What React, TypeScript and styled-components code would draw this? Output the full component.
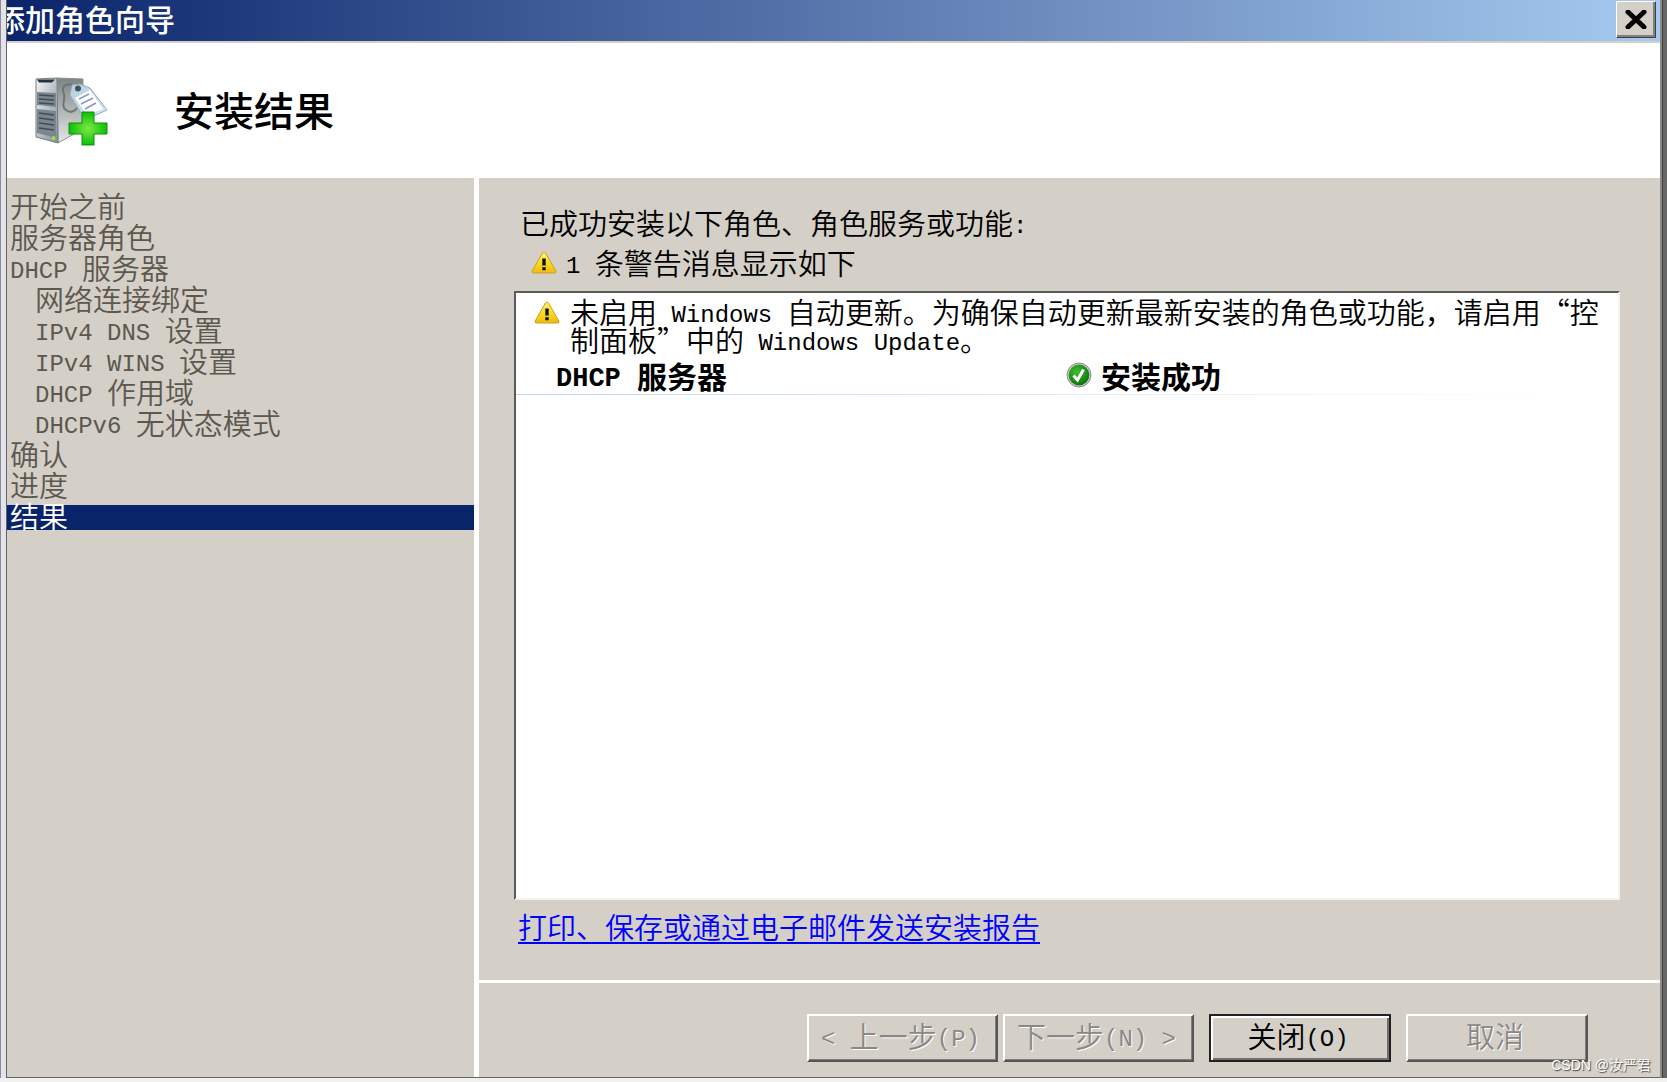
import React from "react";
import styled, { createGlobalStyle, css } from "styled-components";

const GlobalStyle = createGlobalStyle`
  *, *::before, *::after { box-sizing: border-box; }
  body {
    margin: 0;
    background: #f0f0f0;
    color: #000;
    font-family: "Noto Sans CJK SC", "Noto Sans", sans-serif;
    font-size: 29px;
    font-weight: 350;
    line-height: 32px;
  }
`;

const face = "#d4d0c8";

const Desktop = styled.div`
  display: flex;
  min-height: 100vh;
  padding: 0 0 4px;
  background: #f0f0f0;
`;

const LeftEdge = styled.div`
  flex: none;
  width: 7px;
  background: #e4e4e8;
  border-left: 1px solid #868a9c;
  border-right: 1px solid #5f6165;
`;

const RightEdge = styled.div`
  flex: none;
  width: 7px;
  border-left: 2px solid #8c8a86;
  background: linear-gradient(90deg, #404040 0 1px, #666 1px);
`;

const Dialog = styled.main`
  flex: 1;
  min-width: 0;
  display: flex;
  flex-direction: column;
  background: ${face};
  border-bottom: 1px solid #666;
`;

const TitleBar = styled.header`
  display: flex;
  align-items: center;
  justify-content: space-between;
  height: 41px;
  padding: 0 4px 2px 0;
  overflow: hidden;
  background: linear-gradient(90deg, #0a246a, #a6caf0);
`;

const Title = styled.h1`
  margin: 0 0 0 -12px;
  padding-bottom: 4px;
  color: #fff;
  font-size: 30px;
  font-weight: 500;
  line-height: 36px;
  white-space: nowrap;
`;

const raised = css`
  border: 1px solid;
  border-color: #fff #404040 #404040 #fff;
  box-shadow: inset -2px -2px 0 #808080;
`;

const CloseBox = styled.button`
  display: flex;
  align-items: center;
  justify-content: center;
  width: 40px;
  height: 37px;
  padding: 0;
  background: ${face};
  ${raised}
`;

const Banner = styled.section`
  display: flex;
  align-items: center;
  gap: 66px;
  height: 137px;
  padding-left: 27px;
  background: #fff;
  border-top: 2px solid ${face};
`;

const Heading = styled.h2`
  margin: 0;
  padding-bottom: 4px;
  font-size: 40px;
  font-weight: 500;
  line-height: 48px;
`;

const Body = styled.div`
  flex: 1;
  display: grid;
  grid-template-columns: 472px 1fr;
`;

const Sidebar = styled.nav`
  padding-top: 17px;
  border-right: 5px solid #fff;
`;

const Steps = styled.ol`
  display: flex;
  flex-direction: column;
  gap: 6px;
  margin: 0;
  padding: 0;
  list-style: none;
`;

const Step = styled.li<{ $nested?: boolean; $current?: boolean }>`
  height: 25px;
  padding-left: ${(p) => (p.$nested ? 28 : 3)}px;
  color: ${(p) => (p.$current ? "#fff" : "#5c584f")};
  background: ${(p) => (p.$current ? "#0a246a" : "transparent")};
  line-height: 20px;
  white-space: nowrap;
`;

const Latin = styled.span`
  font-family: "Liberation Mono", monospace;
  font-size: 24px;
  line-height: 1px;
  vertical-align: 2px;
  white-space: pre-wrap;
`;

const Content = styled.div`
  display: flex;
  flex-direction: column;
  min-width: 0;
`;

const Results = styled.section`
  flex: 1;
  display: flex;
  flex-direction: column;
  padding: 28px 40px 38px 35px;
`;

const Intro = styled.p`
  margin: 0;
  padding-left: 6px;
`;

const WarningSummary = styled.p`
  display: flex;
  align-items: center;
  gap: 9px;
  margin: 8px 0 13px;
  padding-left: 17px;
`;

const ResultList = styled.div`
  flex: 1;
  padding-top: 4px;
  background: #fff;
  border: 2px solid;
  border-color: #5a5a5a #f4f3f0 #f4f3f0 #5a5a5a;
`;

const Message = styled.div`
  display: flex;
  align-items: flex-start;
  gap: 10px;
  padding: 0 12px 0 18px;
  line-height: 28px;

  svg {
    margin-top: 4px;
  }
`;

const MessageText = styled.p`
  flex: 1;
  margin: 0;
`;

const RoleRow = styled.div`
  display: grid;
  grid-template-columns: 510px 1fr;
  align-items: center;
  height: 36px;
  margin-top: 5px;
  padding: 0 0 2px 40px;
  font-size: 30px;
  font-weight: 700;

  ${Latin} {
    font-size: 27px;
  }
`;

const Status = styled.span`
  display: flex;
  align-items: center;
  gap: 9px;
`;

const Rule = styled.hr`
  height: 1px;
  margin: 0;
  border: 0;
  background: linear-gradient(90deg, #bcd6f5, #fff 95%);
`;

const ReportLink = styled.a`
  align-self: flex-start;
  margin: 10px 0 0 4px;
  color: #0000ff;
  text-decoration-thickness: 2px;
  text-underline-offset: 3px;
`;

const Footer = styled.footer`
  display: flex;
  justify-content: flex-end;
  gap: 15px;
  padding: 31px 72px 15px 0;
  border-top: 3px solid #fff;
`;

const StepButtons = styled.div`
  display: flex;
  gap: 5px;
`;

const Button = styled.button<{ $wide?: boolean }>`
  width: ${(p) => (p.$wide ? 191 : 182)}px;
  height: 48px;
  padding: 0 4px 6px 0;
  background: ${face};
  color: #000;
  font: inherit;
  line-height: 38px;
  white-space: nowrap;
  border: 2px solid;
  border-color: #fff #555 #555 #fff;
  box-shadow: inset -1px -1px 0 #808080;

  &:disabled {
    color: #8a8884;
    text-shadow: 1px 1px 0 #fff;
  }

  &:not(:disabled) {
    border-color: #222;
    box-shadow: inset 2px 2px 0 #fff, inset -2px -2px 0 #707070;
  }
`;

const Watermark = styled.span`
  position: absolute;
  right: 16px;
  bottom: 6px;
  color: #fff;
  font-family: "Liberation Sans", "Noto Sans CJK SC", sans-serif;
  font-size: 14px;
  line-height: 22px;
  text-shadow: 1px 1px 1px #444;
`;

const steps = [
  { text: "开始之前" },
  { text: "服务器角色" },
  { latin: "DHCP ", text: "服务器" },
  { text: "网络连接绑定", nested: true },
  { latin: "IPv4 DNS ", text: "设置", nested: true },
  { latin: "IPv4 WINS ", text: "设置", nested: true },
  { latin: "DHCP ", text: "作用域", nested: true },
  { latin: "DHCPv6 ", text: "无状态模式", nested: true },
  { text: "确认" },
  { text: "进度" },
  { text: "结果", current: true },
];

const CloseIcon = () => (
  <svg width="22" height="19" viewBox="0 0 22 19" aria-hidden="true">
    <path d="M3 2 19 17M19 2 3 17" stroke="#000" strokeWidth="5" strokeLinecap="round" />
  </svg>
);

const WarningIcon = () => (
  <svg width="26" height="23" viewBox="0 0 26 23" aria-hidden="true">
    <defs>
      <linearGradient id="amber" x1="0" y1="0" x2="0" y2="1">
        <stop offset="0" stopColor="#fff27a" />
        <stop offset=".5" stopColor="#fbdc20" />
        <stop offset="1" stopColor="#eebb10" />
      </linearGradient>
    </defs>
    <path d="M11.4 2Q13 0 14.6 2L24.8 20Q25.6 22 23.5 22H2.5Q.4 22 1.2 20Z" fill="url(#amber)" stroke="#c9a21c" />
    <path d="M11.3 7.5h3.4v7h-3.4zM11.3 16.2h3.4v3h-3.4z" fill="#111" />
  </svg>
);

const SuccessIcon = () => (
  <svg width="26" height="26" viewBox="0 0 26 26" aria-hidden="true">
    <defs>
      <radialGradient id="green" cx=".4" cy=".35" r=".7">
        <stop offset="0" stopColor="#3ec02c" />
        <stop offset="1" stopColor="#0b720b" />
      </radialGradient>
    </defs>
    <circle cx="13" cy="13" r="12" fill="#c9c9c9" stroke="#8c8c8c" />
    <circle cx="13" cy="13" r="10.4" fill="url(#green)" />
    <path d="M7.5 13.5 11.5 18 17.5 7.5" fill="none" stroke="#fff" strokeWidth="3" />
  </svg>
);

const ServerIcon = () => (
  <svg width="74" height="70" viewBox="0 0 74 70" aria-hidden="true">
    <defs>
      <linearGradient id="front" x1="0" y1="0" x2="1" y2="1">
        <stop offset="0" stopColor="#f0f6f8" />
        <stop offset="1" stopColor="#858d95" />
      </linearGradient>
      <linearGradient id="side" x1="0" y1="0" x2="0" y2="1">
        <stop offset="0" stopColor="#7c8583" />
        <stop offset="1" stopColor="#e4e6e6" />
      </linearGradient>
      <linearGradient id="tag" x1="0" y1="0" x2="1" y2="1">
        <stop offset="0" stopColor="#b7cedd" />
        <stop offset="1" stopColor="#d8e8f3" />
      </linearGradient>
      <radialGradient id="plus">
        <stop offset="0" stopColor="#7bea45" />
        <stop offset="1" stopColor="#10bd08" />
      </radialGradient>
    </defs>
    <path d="M23 2 49 3V53L24 67Z" fill="url(#side)" stroke="#8b9190" />
    <path d="M2 3 23 2 24 67 2 61Z" fill="url(#front)" stroke="#737c82" />
    <path d="M3 3.5h18l-3 3H5z" fill="#22343d" />
    <path d="M3 16 22 17V31L3 29ZM3 33 22 35V62L3 57Z" fill="#7b8590" />
    <path d="M5 19l15 1M5 23l15 1M5 27l15 1M5 37l15 2M5 42l15 2M5 47l15 2M5 52l15 2" stroke="#424c57" strokeWidth="1.4" />
    <circle cx="19.5" cy="62" r="2" fill="#92e52c" />
    <path d="M42 10C30 6 27 11 30 18 32 25 26 29 32 34 36 37 40 36 43 32" fill="none" stroke="#6e7673" strokeWidth="2" />
    <path d="M38 9 46 8 56 12 73 34 53 43 47 37 36 19Z" fill="url(#tag)" stroke="#91abc0" />
    <path d="M41 22 56 14 69 33 53 39Z" fill="#fff" />
    <path d="M45 23l10-5M47 28l12-6M51 33l11-6" stroke="#8999cf" strokeWidth="1.6" />
    <circle cx="44" cy="12.5" r="3" fill="#3e5360" />
    <path d="M48 36h12v11h13v11H60v11H48V58H35V47h13z" fill="url(#plus)" stroke="#089307" strokeLinejoin="round" />
  </svg>
);

export default function App() {
  return (
    <>
      <GlobalStyle />
      <Desktop>
        <LeftEdge />
        <Dialog>
          <TitleBar>
            <Title>添加角色向导</Title>
            <CloseBox type="button" aria-label="关闭"><CloseIcon /></CloseBox>
          </TitleBar>
          <Banner>
            <ServerIcon />
            <Heading>安装结果</Heading>
          </Banner>
          <Body>
            <Sidebar>
              <Steps>
                {steps.map((s, i) => (
                  <Step key={i} $nested={s.nested} $current={s.current} aria-current={s.current ? "step" : undefined}>
                    {s.latin && <Latin>{s.latin}</Latin>}
                    {s.text}
                  </Step>
                ))}
              </Steps>
            </Sidebar>
            <Content>
              <Results>
                <Intro>已成功安装以下角色、角色服务或功能<Latin>:</Latin></Intro>
                <WarningSummary>
                  <WarningIcon />
                  <span><Latin>1 </Latin>条警告消息显示如下</span>
                </WarningSummary>
                <ResultList>
                  <Message>
                    <WarningIcon />
                    <MessageText>
                      未启用<Latin> Windows </Latin>自动更新。为确保自动更新最新安装的角色或功能，请启用“控制面板”中的<Latin> Windows Update</Latin>。
                    </MessageText>
                  </Message>
                  <RoleRow>
                    <span><Latin>DHCP </Latin>服务器</span>
                    <Status><SuccessIcon />安装成功</Status>
                  </RoleRow>
                  <Rule />
                </ResultList>
                <ReportLink href="#report">打印、保存或通过电子邮件发送安装报告</ReportLink>
              </Results>
              <Footer>
                <StepButtons>
                  <Button type="button" $wide disabled><Latin>&lt; </Latin>上一步<Latin>(P)</Latin></Button>
                  <Button type="button" $wide disabled>下一步<Latin>(N) &gt;</Latin></Button>
                </StepButtons>
                <Button type="button">关闭<Latin>(O)</Latin></Button>
                <Button type="button" disabled>取消</Button>
              </Footer>
            </Content>
          </Body>
        </Dialog>
        <RightEdge />
      </Desktop>
      <Watermark>CSDN @汝严君</Watermark>
    </>
  );
}
